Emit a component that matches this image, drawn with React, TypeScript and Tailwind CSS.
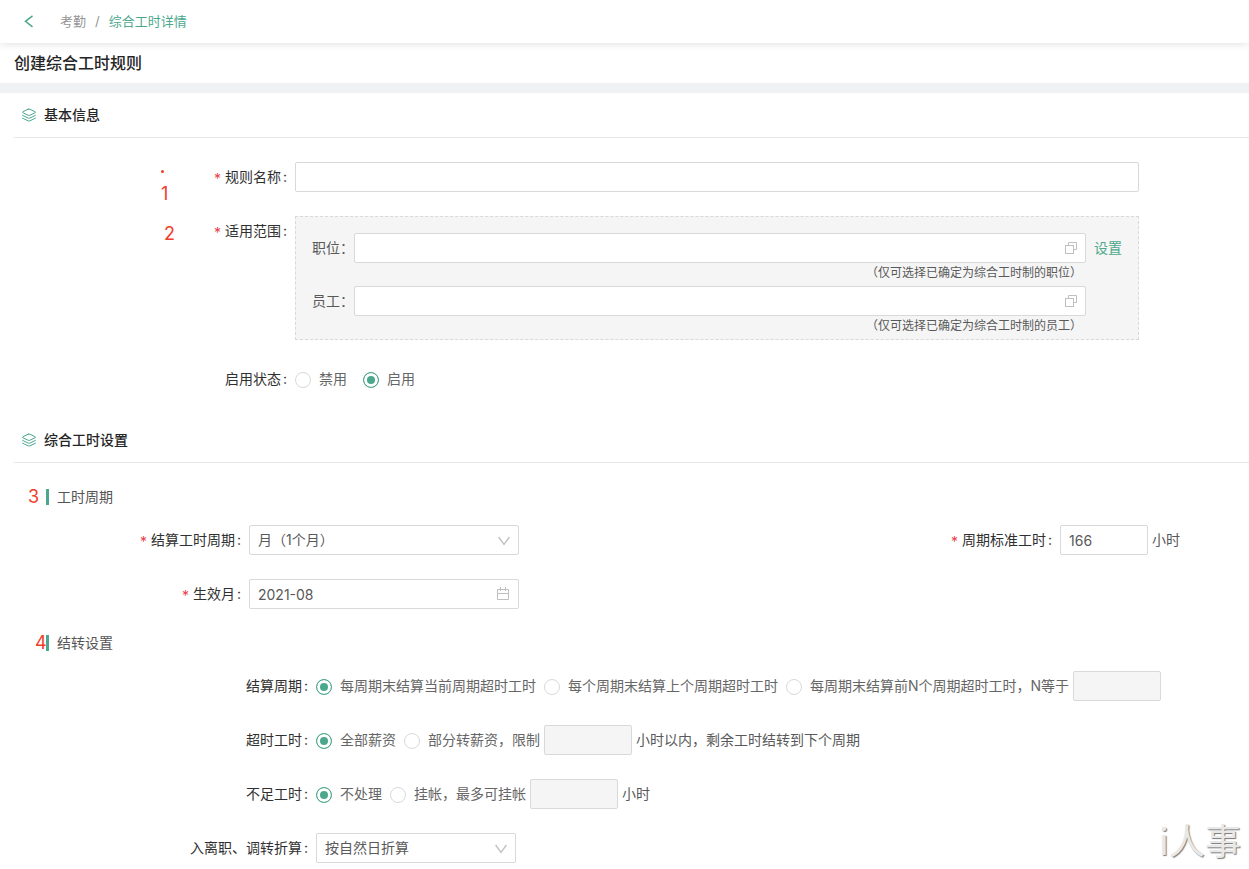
import React, { useState } from 'react';

interface LabelProps {
  text: string;
  width: string;
  htmlFor?: string;
  id?: string;
  required?: boolean;
}

const textBox =
  'h-[30px] rounded-xs border border-[#d9d9d9] bg-white px-2 text-sm text-[#595959] outline-none focus:border-[#4ca88d] disabled:bg-[#f5f5f5]';

const FieldLabel: React.FC<LabelProps> = ({ text, width, htmlFor, id, required }) => {
  const content = (
    <>
      {required && <span className="mr-1 align-[-2px] leading-none text-[#e8404a]">*</span>}
      {text}
      <span className="ml-0.5">:</span>
    </>
  );
  const classes = `${width} shrink-0 pr-2 text-right leading-[30px] whitespace-nowrap text-[#303030]`;

  return htmlFor ? (
    <label htmlFor={htmlFor} className={classes}>{content}</label>
  ) : (
    <span id={id} className={classes}>{content}</span>
  );
};

const LayersIcon: React.FC = () => (
  <svg className="size-[14px] text-[#4ca88d]" viewBox="0 0 14 14" fill="none" stroke="currentColor" strokeLinejoin="round" strokeLinecap="round" aria-hidden="true">
    <path d="M6.2 1.2 1 3.7c-.6.3-.6.8 0 1.1l5.2 2.5c.5.2 1.1.2 1.6 0L13 4.8c.6-.3.6-.8 0-1.1L7.8 1.2c-.5-.2-1.1-.2-1.6 0Z" />
    <path d="m.6 7.4 5.6 2.7c.5.2 1.1.2 1.6 0l5.6-2.7" />
    <path d="m.6 10.2 5.6 2.7c.5.2 1.1.2 1.6 0l5.6-2.7" />
  </svg>
);

const CopyIcon: React.FC = () => (
  <svg className="size-[14px]" viewBox="0 0 14 14" fill="none" stroke="#bfbfbf" aria-hidden="true">
    <path d="M4.5 4.5v-3h8v7h-3" />
    <rect x="1.5" y="4.5" width="8" height="8" />
  </svg>
);

const ChevronIcon: React.FC = () => (
  <svg className="pointer-events-none absolute top-[9px] right-[9px] size-[12px]" viewBox="0 0 12 12" fill="none" stroke="#bfbfbf" strokeWidth="1.3" aria-hidden="true">
    <path d="M.6 3 6 10.4 11.4 3" />
  </svg>
);

const CalendarIcon: React.FC = () => (
  <svg className="pointer-events-none absolute top-2 right-[9px] size-[14px]" viewBox="0 0 14 14" fill="none" stroke="#bfbfbf" aria-hidden="true">
    <path d="M1.5 2.5h11v10h-11zM1.5 6.5h11M4.5 0v4M9.5 0v4" />
  </svg>
);

const SectionTitle: React.FC<{ title: string }> = ({ title }) => (
  <div className="ml-[14px] flex h-[45px] items-center gap-2 border-b border-[#e8e8e8] pl-2">
    <LayersIcon />
    <h2 className="text-sm font-medium text-[#262626]">{title}</h2>
  </div>
);

const SubTitle: React.FC<{ title: string; mark: string; markPosition: string }> = ({ title, mark, markPosition }) => (
  <div className="relative mt-5 mb-[14px] ml-[46px] flex h-7 items-center gap-2">
    <span className={`absolute top-0 text-lg text-[#f03c28] ${markPosition}`}>{mark}</span>
    <span className="h-4 w-[3px] bg-[#4ca88d]" />
    <h3 className="text-sm text-[#555]">{title}</h3>
  </div>
);

interface RadioProps {
  name: string;
  label: string;
  checked: boolean;
  onChange: () => void;
}

const Radio: React.FC<RadioProps> = ({ name, label, checked, onChange }) => (
  <label className="flex items-center gap-2 whitespace-nowrap text-[#666]">
    <input
      type="radio"
      name={name}
      checked={checked}
      onChange={onChange}
      className="mt-px size-4 shrink-0 appearance-none rounded-full border border-[#d9d9d9] bg-white checked:border-[#4ca88d] checked:bg-[#4ca88d] checked:shadow-[inset_0_0_0_3px_white]"
    />
    {label}
  </label>
);

const App: React.FC = () => {
  const [status, setStatus] = useState('on');
  const [settle, setSettle] = useState('current');
  const [overtime, setOvertime] = useState('all');
  const [shortage, setShortage] = useState('none');

  const scopes = [
    { id: 'position', label: '职位：', hint: '（仅可选择已确定为综合工时制的职位）', link: true },
    { id: 'employee', label: '员工：', hint: '（仅可选择已确定为综合工时制的员工）', link: false },
  ];

  return (
    <div className="relative min-h-screen bg-white pb-[6px] font-[Inter,'Noto_Sans_CJK_SC',sans-serif] text-sm text-[#595959]">
      <header className="relative flex h-[43px] items-center bg-white pl-[22px] text-[13px] shadow-[0_1px_8px_rgba(0,0,0,0.12)]">
        <button type="button" aria-label="返回" className="mr-6">
          <svg className="size-[14px]" viewBox="0 0 14 14" fill="none" stroke="#4ca88d" strokeWidth="1.5" aria-hidden="true">
            <path d="M10.5 .8 3.5 6.3l7 5.5" />
          </svg>
        </button>
        <nav className="flex items-center gap-2">
          <a href="#attendance" className="text-[#959595]">考勤</a>
          <span className="px-px text-[#959595]">/</span>
          <a href="#detail" className="text-[#4ca88d]">综合工时详情</a>
        </nav>
      </header>

      <div className="flex h-[50px] items-center border-b-10 border-[#f0f1f3] pl-[14px]">
        <h1 className="text-base font-medium text-[#262626]">创建综合工时规则</h1>
      </div>

      <section>
        <SectionTitle title="基本信息" />
        <div className="relative mt-6 mr-[110px] mb-6 ml-[14px] flex flex-col gap-6">
          <div className="absolute top-2 left-[147px] flex flex-col text-lg leading-5 text-[#f03c28]">
            <span className="size-[3px] rounded-full bg-[#f03c28]" />
            <span className="mt-[11px]">1</span>
            <span className="mt-5 ml-[3px]">2</span>
          </div>

          <div className="flex">
            <FieldLabel htmlFor="rule-name" text="规则名称" width="w-[281px]" required />
            <input id="rule-name" type="text" className={`${textBox} min-w-0 flex-1`} />
          </div>

          <div className="flex">
            <FieldLabel id="scope-label" text="适用范围" width="w-[281px]" required />
            <div role="group" aria-labelledby="scope-label" className="min-w-0 flex-1 border border-dashed border-[#d9d9d9] bg-[#f5f5f5] px-4 pt-4">
              {scopes.map(scope => (
                <div key={scope.id} className="flex">
                  <label htmlFor={scope.id} className="w-[42px] shrink-0 leading-[30px] whitespace-nowrap">{scope.label}</label>
                  <div className="min-w-0 flex-1">
                    <div className="relative">
                      <input id={scope.id} type="text" className={`${textBox} block w-full pr-8`} />
                      <button type="button" aria-label="选择" className="absolute top-2 right-2">
                        <CopyIcon />
                      </button>
                    </div>
                    <p className="h-[23px] pr-1 text-right text-xs leading-5">{scope.hint}</p>
                  </div>
                  <div className="ml-2 w-7 shrink-0 leading-[30px]">
                    {scope.link && <a href="#setting" className="text-[#4ca88d]">设置</a>}
                  </div>
                </div>
              ))}
            </div>
          </div>

          <div className="flex">
            <FieldLabel id="status-label" text="启用状态" width="w-[281px]" />
            <div role="radiogroup" aria-labelledby="status-label" className="flex gap-4">
              <Radio name="status" label="禁用" checked={status === 'off'} onChange={() => setStatus('off')} />
              <Radio name="status" label="启用" checked={status === 'on'} onChange={() => setStatus('on')} />
            </div>
          </div>
        </div>
      </section>

      <section>
        <SectionTitle title="综合工时设置" />

        <SubTitle title="工时周期" mark="3" markPosition="-left-[18px]" />
        <div className="mr-[69px] ml-[14px] flex flex-col gap-6">
          <div className="flex justify-between">
            <div className="flex">
              <FieldLabel htmlFor="cycle" text="结算工时周期" width="w-[235px]" required />
              <div className="relative w-[270px]">
                <select id="cycle" className={`${textBox} w-full appearance-none`}>
                  <option>月（1个月）</option>
                </select>
                <ChevronIcon />
              </div>
            </div>
            <div className="flex items-center">
              <FieldLabel htmlFor="standard" text="周期标准工时" width="w-auto" required />
              <input id="standard" type="text" defaultValue="166" className={`${textBox} w-22`} />
              <span className="ml-1">小时</span>
            </div>
          </div>
          <div className="flex">
            <FieldLabel htmlFor="month" text="生效月" width="w-[235px]" required />
            <div className="relative w-[270px]">
              <input id="month" type="text" defaultValue="2021-08" className={`${textBox} w-full`} />
              <CalendarIcon />
            </div>
          </div>
        </div>

        <SubTitle title="结转设置" mark="4" markPosition="-left-[11px]" />
        <div className="ml-[14px] flex flex-col gap-6">
          <div className="flex">
            <FieldLabel id="settle-label" text="结算周期" width="w-[302px]" />
            <div role="radiogroup" aria-labelledby="settle-label" className="flex gap-2">
              <Radio name="settle" label="每周期末结算当前周期超时工时" checked={settle === 'current'} onChange={() => setSettle('current')} />
              <Radio name="settle" label="每个周期末结算上个周期超时工时" checked={settle === 'previous'} onChange={() => setSettle('previous')} />
              <Radio name="settle" label="每周期末结算前N个周期超时工时，N等于" checked={settle === 'n'} onChange={() => setSettle('n')} />
            </div>
            <input type="text" aria-label="N等于" disabled={settle !== 'n'} className={`${textBox} ml-1 w-22`} />
          </div>

          <div className="flex items-center">
            <FieldLabel id="overtime-label" text="超时工时" width="w-[302px]" />
            <div role="radiogroup" aria-labelledby="overtime-label" className="flex gap-2">
              <Radio name="overtime" label="全部薪资" checked={overtime === 'all'} onChange={() => setOvertime('all')} />
              <Radio name="overtime" label="部分转薪资，限制" checked={overtime === 'part'} onChange={() => setOvertime('part')} />
            </div>
            <input type="text" aria-label="限制小时" disabled={overtime !== 'part'} className={`${textBox} mx-1 w-22`} />
            <span>小时以内，剩余工时结转到下个周期</span>
          </div>

          <div className="flex items-center">
            <FieldLabel id="shortage-label" text="不足工时" width="w-[302px]" />
            <div role="radiogroup" aria-labelledby="shortage-label" className="flex gap-2">
              <Radio name="shortage" label="不处理" checked={shortage === 'none'} onChange={() => setShortage('none')} />
              <Radio name="shortage" label="挂帐，最多可挂帐" checked={shortage === 'hold'} onChange={() => setShortage('hold')} />
            </div>
            <input type="text" aria-label="最多可挂帐小时" disabled={shortage !== 'hold'} className={`${textBox} mx-1 w-22`} />
            <span>小时</span>
          </div>

          <div className="flex">
            <FieldLabel htmlFor="convert" text="入离职、调转折算" width="w-[302px]" />
            <div className="relative w-[200px]">
              <select id="convert" className={`${textBox} w-full appearance-none`}>
                <option>按自然日折算</option>
              </select>
              <ChevronIcon />
            </div>
          </div>
        </div>
      </section>

      <div className="pointer-events-none absolute right-2 bottom-2 font-['Noto_Sans_CJK_SC',sans-serif] text-4xl leading-[44px] font-normal text-[#e8e8e8] text-shadow-[1px_1px_1px_#777]">
        i人事
      </div>
    </div>
  );
};

export default App;
